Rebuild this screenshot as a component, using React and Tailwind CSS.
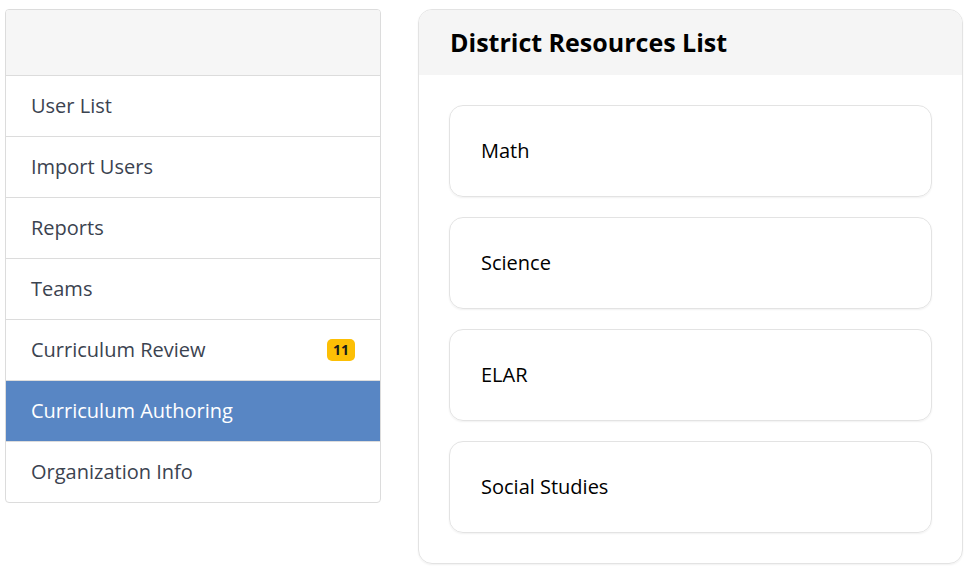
const menu = [
  { label: "User List" },
  { label: "Import Users" },
  { label: "Reports" },
  { label: "Teams" },
  { label: "Curriculum Review", badge: 11 },
  { label: "Curriculum Authoring", active: true },
  { label: "Organization Info" },
];

const resources = ["Math", "Science", "ELAR", "Social Studies"];

export default function App() {
  return (
    <div
      className="flex items-start gap-[37px] pl-[5px] pt-[9px] bg-white w-[975px] h-[576px]"
      style={{ fontFamily: '"Open Sans", sans-serif' }}
    >
      {/* Sidebar */}
      <div className="w-[376px] border border-[#dcdcdc] rounded-[4px] overflow-hidden">
        <div className="h-[66px] bg-[#f6f6f6] border-b border-[#dcdcdc]" />
        {menu.map((item, i) => (
          <div
            key={item.label}
            className={`flex items-center justify-between pl-[25px] pr-[25px] text-[20px] ${
              i < menu.length - 1 ? "h-[61px] border-b border-[#dcdcdc]" : "h-[60px]"
            } ${item.active ? "bg-[#5886c4] text-white border-[#5886c4]" : "text-[#3b4350]"}`}
          >
            <span>{item.label}</span>
            {item.badge && (
              <span className="bg-[#fcbf05] text-[#1a1a1a] text-[14px] font-bold rounded-[5px] px-[6px] leading-[22px]">
                {item.badge}
              </span>
            )}
          </div>
        ))}
      </div>

      {/* Resources panel */}
      <div className="w-[545px] h-[555px] border border-[#e3e3e3] rounded-[14px] overflow-hidden shadow-[0_1px_2px_rgba(0,0,0,0.06)]">
        <div className="h-[65px] bg-[#f5f5f5] flex items-center pl-[31px]">
          <h2 className="text-[25px] font-bold text-black">District Resources List</h2>
        </div>
        <div className="flex flex-col gap-[20px] px-[30px] pt-[30px]">
          {resources.map((r) => (
            <div
              key={r}
              className="h-[92px] border border-[#e3e3e3] rounded-[14px] flex items-center pl-[31px] text-[20px] text-black shadow-[0_1px_2px_rgba(0,0,0,0.06)]"
            >
              {r}
            </div>
          ))}
        </div>
      </div>
    </div>
  );
}
